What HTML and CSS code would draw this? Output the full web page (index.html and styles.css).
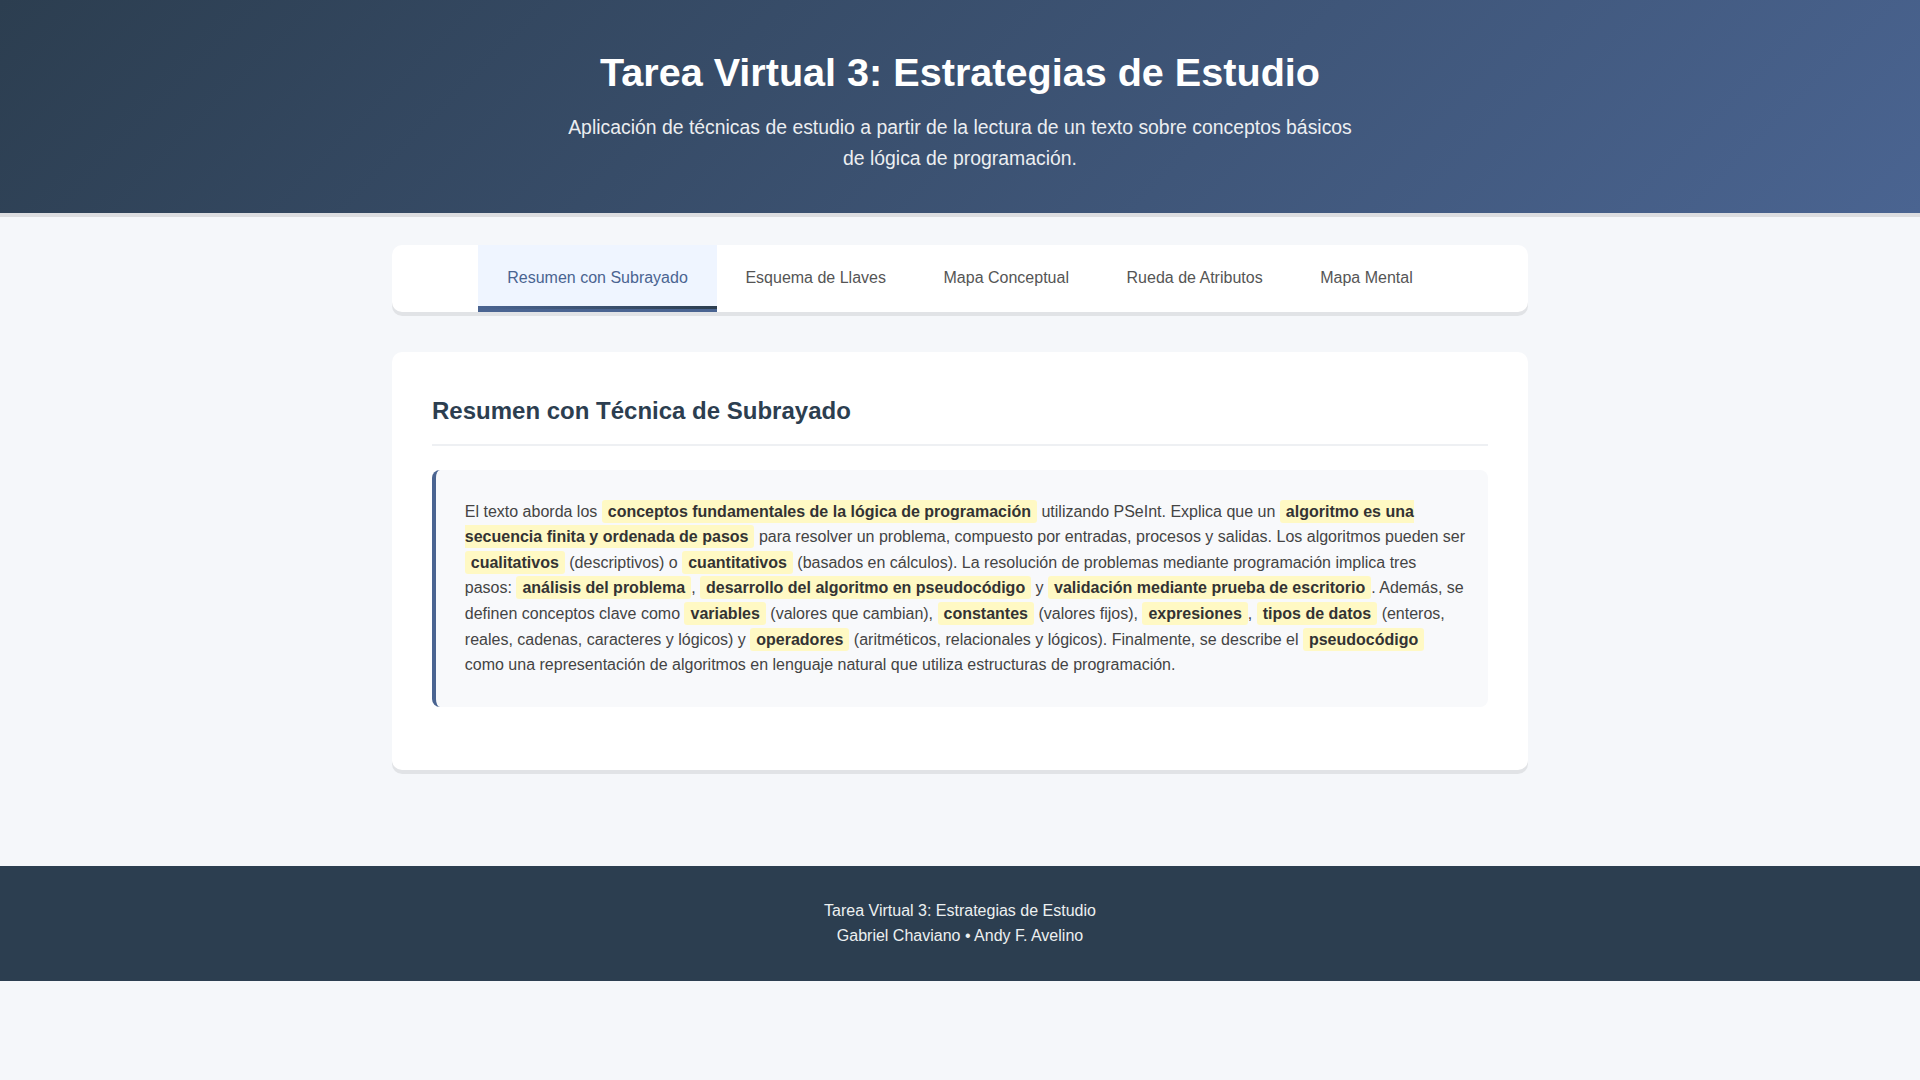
FILE: index.html
```html
<!DOCTYPE html>
<html lang="es">
<head>
<meta charset="utf-8">
<title>Tarea Virtual 3: Estrategias de Estudio</title>
<link rel="stylesheet" href="styles.css">
</head>
<body>
<header class="site-header">
  <h1 class="site-title">Tarea Virtual 3: Estrategias de Estudio</h1>
  <p class="site-subtitle">Aplicación de técnicas de estudio a partir de la lectura de un texto sobre conceptos básicos de lógica de programación.</p>
</header>
<main class="container">
  <nav class="tabs">
    <a class="tab active" href="#">Resumen con Subrayado</a>
    <a class="tab" href="#">Esquema de Llaves</a>
    <a class="tab" href="#">Mapa Conceptual</a>
    <a class="tab" href="#">Rueda de Atributos</a>
    <a class="tab" href="#">Mapa Mental</a>
  </nav>
  <section class="card">
    <h2 class="card-title">Resumen con Técnica de Subrayado</h2>
    <div class="summary">
      <p class="summary-text">El texto aborda los <span class="hl">conceptos fundamentales de la lógica de programación</span> utilizando PSeInt. Explica que un <span class="hl">algoritmo es una secuencia finita y ordenada de pasos</span> para resolver un problema, compuesto por entradas, procesos y salidas. Los algoritmos pueden ser <span class="hl">cualitativos</span> (descriptivos) o <span class="hl">cuantitativos</span> (basados en cálculos). La resolución de problemas mediante programación implica tres pasos: <span class="hl">análisis del problema</span>, <span class="hl">desarrollo del algoritmo en pseudocódigo</span> y <span class="hl">validación mediante prueba de escritorio</span>. Además, se definen conceptos clave como <span class="hl">variables</span> (valores que cambian), <span class="hl">constantes</span> (valores fijos), <span class="hl">expresiones</span>, <span class="hl">tipos de datos</span> (enteros, reales, cadenas, caracteres y lógicos) y <span class="hl">operadores</span> (aritméticos, relacionales y lógicos). Finalmente, se describe el <span class="hl">pseudocódigo</span> como una representación de algoritmos en lenguaje natural que utiliza estructuras de programación.</p>
    </div>
  </section>
</main>
<footer class="site-footer">
  <p class="footer-line">Tarea Virtual 3: Estrategias de Estudio</p>
  <p class="footer-line">Gabriel Chaviano • Andy F. Avelino</p>
</footer>
</body>
</html>
```

FILE: styles.css
```css
* {
  box-sizing: border-box;
}

html, body {
  margin: 0;
  padding: 0;
}

body {
  font-family: "Liberation Sans", Arial, sans-serif;
  font-size: 16px;
  line-height: 1.6;
  color: #333;
  background: #f5f7fa;
}

.site-header {
  background: linear-gradient(135deg, #2c3e50 0%, #4a6491 100%);
  color: #fff;
  text-align: center;
  padding: 40px 20px;
  box-shadow: 0 4px 0 rgba(0, 0, 0, 0.1);
}

.site-title {
  margin: 0 0 8px;
  font-size: 39.6px;
  font-weight: bold;
  line-height: 64px;
}

.site-subtitle {
  margin: 0 auto;
  max-width: 800px;
  font-size: 19.4px;
  line-height: 30.7px;
  opacity: 0.9;
}

.container {
  max-width: 1200px;
  margin: 0 auto;
  padding: 32px;
}

.tabs {
  display: flex;
  justify-content: center;
  flex-wrap: wrap;
  background: #fff;
  border-radius: 10px;
  overflow: hidden;
  box-shadow: 0 4px 0 rgba(0, 0, 0, 0.08);
  margin-bottom: 40px;
}

.tab {
  display: block;
  padding: 19.2px 28.8px;
  color: #555;
  text-decoration: none;
  font-size: 16px;
  line-height: 1.6;
  border-bottom: 3px solid transparent;
}

.tab.active {
  color: #4a6491;
  background:
    linear-gradient(90deg, #4a6491, #2c3e50) left bottom / 100% 3px no-repeat,
    #eff5ff;
  border-bottom-color: #4a6491;
}

.card {
  background: #fff;
  border-radius: 10px;
  padding: 40px;
  box-shadow: 0 4px 0 rgba(0, 0, 0, 0.08);
  margin-bottom: 32px;
}

.card-title {
  margin: 0 0 24px;
  font-size: 24px;
  line-height: 1.6;
  color: #2c3e50;
  padding-bottom: 13px;
  border-bottom: 2px solid #eef0f3;
}

.summary {
  background: #f8f9fb;
  border-left: 4px solid #4a6491;
  border-radius: 8px;
  padding: 28.8px 21.7px 28.8px 28.8px;
  margin-bottom: 23px;
}

.summary-text {
  margin: 0;
  color: #444;
  line-height: 1.6;
}

.hl {
  background: #fff9c4;
  color: #333;
  font-weight: bold;
  padding: 3px 6px;
  border-radius: 3px;
}

.site-footer {
  background: #2c3e50;
  color: #ecf0f1;
  text-align: center;
  padding: 32px 20px;
  margin-top: 32px;
}

.footer-line {
  margin: 0;
  line-height: 1.6;
}
```
